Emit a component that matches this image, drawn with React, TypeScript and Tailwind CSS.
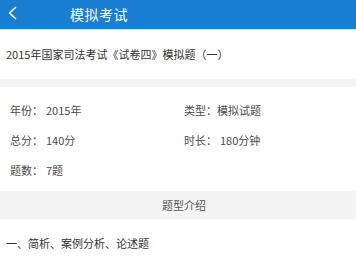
import React from 'react'

const font = { fontFamily: '"Noto Sans CJK SC", "Noto Sans", sans-serif' }

function InfoRow({ label, value, gap = true }: { label: string; value: string; gap?: boolean }) {
  return (
    <div className="h-[30px] flex items-center text-[11px] text-[#4a4a4a]">
      <span>{label}：</span>
      <span className={gap ? 'ml-[3px]' : ''}>{value}</span>
    </div>
  )
}

export default function App() {
  return (
    <div className="w-[356px] h-[258px] bg-white overflow-hidden" style={font}>
      {/* header */}
      <div className="h-[29px] bg-[#1b7fd1] flex items-center">
        <svg width="24" height="29" viewBox="0 0 24 29" className="shrink-0">
          <polyline points="15.5,7.5 9.5,13 15.5,18.5" fill="none" stroke="white" strokeWidth="1.6" strokeLinecap="round" strokeLinejoin="round" />
        </svg>
        <span className="ml-[46px] text-[14px] text-white tracking-[0.5px]">模拟考试</span>
      </div>
      <div className="h-px bg-[#d4e3f1]" />

      {/* title */}
      <div className="h-[49px] flex items-center pl-[6px] text-[11px] text-[#333]">
        2015年国家司法考试《试卷四》模拟题（一）
      </div>
      <div className="h-[8px] bg-[#f4f4f4]" />

      {/* info */}
      <div className="grid grid-cols-[174px_1fr] pl-[10px] pt-[8px] pb-[6px]">
        <InfoRow label="年份" value="2015年" />
        <InfoRow label="类型" value="模拟试题" gap={false} />
        <InfoRow label="总分" value="140分" />
        <InfoRow label="时长" value="180分钟" />
        <InfoRow label="题数" value="7题" />
      </div>

      {/* section */}
      <div className="h-[28px] bg-[#f4f4f4] flex items-center justify-center pl-[12px] text-[11px] text-[#555]">
        题型介绍
      </div>
      <div className="h-[48px] flex items-center pl-[6px] text-[11px] text-[#333]">
        一、简析、案例分析、论述题
      </div>
    </div>
  )
}
